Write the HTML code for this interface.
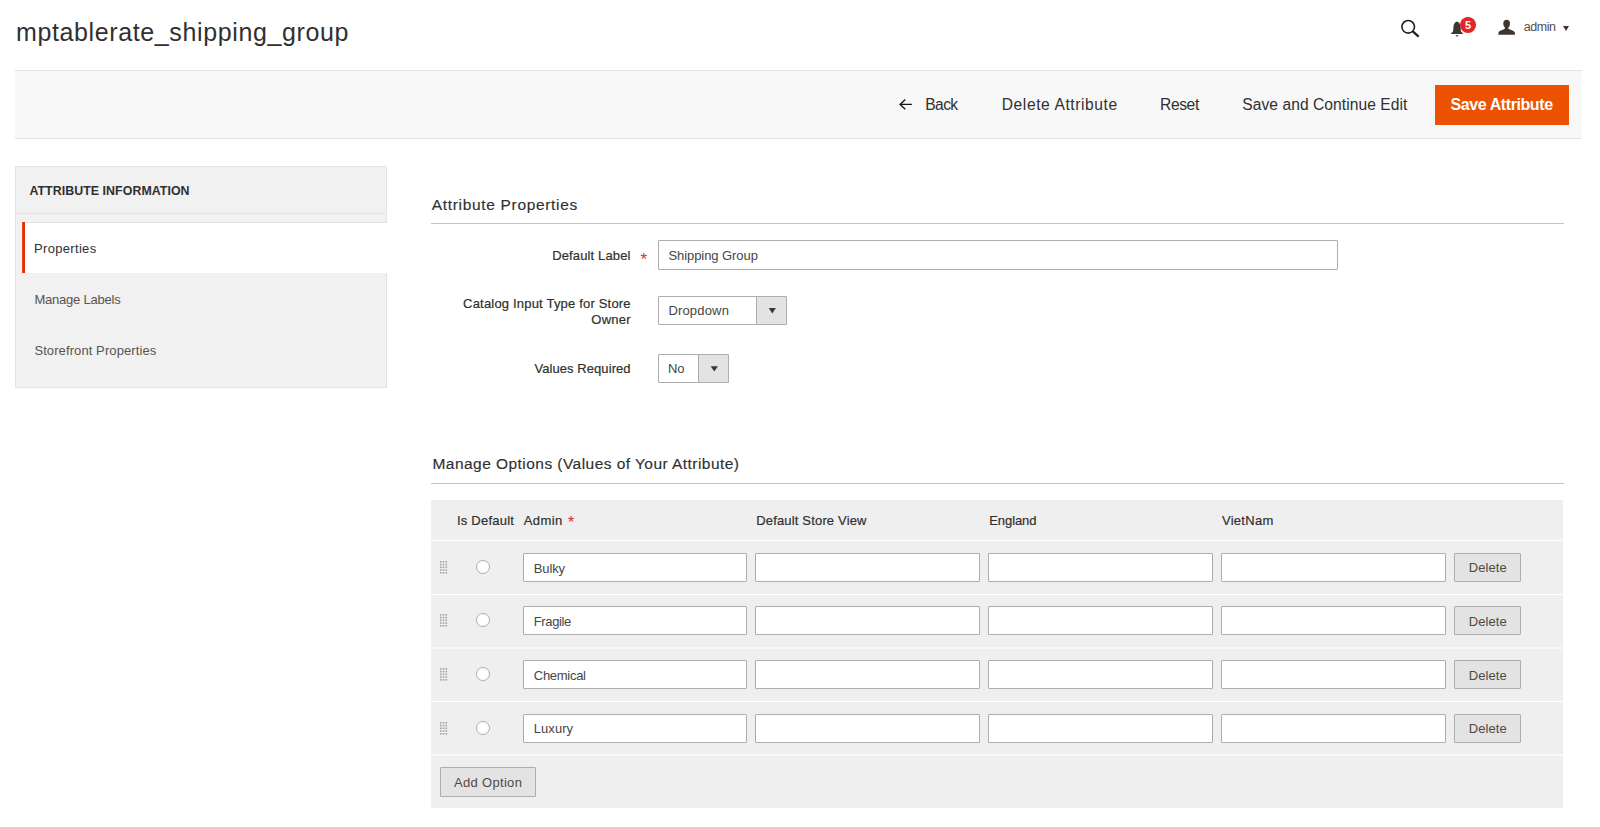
<!DOCTYPE html>
<html><head><meta charset="utf-8"><title>mptablerate_shipping_group</title>
<style>
html,body{margin:0;padding:0;background:#fff;width:1600px;height:827px;overflow:hidden;}
body{position:relative;font-family:"Liberation Sans",sans-serif;}
.t{position:absolute;white-space:nowrap;line-height:1;}
.b{position:absolute;}
</style></head><body>
<div class="t" style="left:16.00px;top:19.94px;font-size:25px;letter-spacing:0.621px;color:#303030;">mptablerate_shipping_group</div>
<svg class="b" style="left:1395px;top:12px" width="30" height="30" viewBox="0 0 30 30"><circle cx="13.2" cy="14.8" r="6.3" fill="none" stroke="#1e1e1e" stroke-width="1.6"/><line x1="17.8" y1="19.4" x2="23.6" y2="24.6" stroke="#1e1e1e" stroke-width="2.1" stroke-linecap="butt"/></svg>
<svg class="b" style="left:1445px;top:15px" width="24" height="24" viewBox="0 0 24 24"><path d="M12 6.4C9.6 6.8 8.6 9.4 8.4 12.4L8.1 16.2 5.7 19H18.3L15.9 16.2 15.6 12.4C15.4 9.4 14.4 6.8 12 6.4Z" fill="#41362f"/><path d="M10.5 20.2h3L12 22z" fill="#41362f"/></svg>
<div class="b" style="left:1460px;top:17px;width:16px;height:16px;border-radius:50%;background:#e22626;"></div>
<div class="t" style="left:1465.00px;top:19.69px;font-size:11px;letter-spacing:-0.105px;color:#fff;font-weight:bold;">5</div>
<svg class="b" style="left:1497px;top:19px" width="20" height="17" viewBox="0 0 20 17"><path d="M9.6 0.8C7.6 0.8 6.3 2.2 6.3 4.4 6.3 6.2 7 7.6 7.9 8.4V9.8C6 10.8 2.8 11.6 1.5 13.2L1.3 15.8H18L17.8 13.2C16.5 11.6 13.3 10.8 11.4 9.8V8.4C12.3 7.6 13 6.2 13 4.4 13 2.2 11.7 0.8 9.6 0.8Z" fill="#41362f"/></svg>
<div class="t" style="left:1523.75px;top:20.67px;font-size:12.5px;letter-spacing:-0.453px;color:#57504b;">admin</div>
<div class="b" style="left:1562.5px;top:25.8px;width:0;height:0;border-left:3.7px solid transparent;border-right:3.7px solid transparent;border-top:5px solid #41362f;"></div>
<div class="b" style="left:15px;top:70px;width:1567px;height:69px;background:#f8f8f8;border-top:1px solid #e3e3e3;border-bottom:1px solid #e3e3e3;box-sizing:border-box;"></div>
<svg class="b" style="left:898px;top:97px" width="16" height="15" viewBox="0 0 16 15"><path d="M13.9 7.4H2.2M7.3 2.5 2.1 7.4 7.3 12.2" fill="none" stroke="#151515" stroke-width="1.35"/></svg>
<div class="t" style="left:925.25px;top:97.29px;font-size:15.6px;letter-spacing:-0.596px;color:#303030;">Back</div>
<div class="t" style="left:1001.75px;top:97.29px;font-size:15.6px;letter-spacing:0.586px;color:#303030;">Delete Attribute</div>
<div class="t" style="left:1160.00px;top:97.29px;font-size:15.6px;letter-spacing:-0.379px;color:#303030;">Reset</div>
<div class="t" style="left:1242.30px;top:97.29px;font-size:15.6px;letter-spacing:0.059px;color:#303030;">Save and Continue Edit</div>
<div class="b" style="left:1435px;top:85px;width:134px;height:40px;background:#eb5202;"></div>
<div class="t" style="left:1450.60px;top:97.06px;font-size:16px;letter-spacing:-0.418px;color:#fff;font-weight:bold;">Save Attribute</div>
<div class="b" style="left:15px;top:166px;width:372px;height:222px;background:#f1f1f1;border:1px solid #e3e3e3;box-sizing:border-box;"></div>
<div class="b" style="left:16px;top:213px;width:370px;height:1px;background:#e3e3e3;"></div>
<div class="b" style="left:22px;top:222px;width:365px;height:51px;background:#fff;"></div>
<div class="b" style="left:25px;top:222px;width:362px;height:1px;background:#e3e3e3;"></div>
<div class="b" style="left:22px;top:222px;width:3px;height:51px;background:linear-gradient(90deg,#ea4a10 0,#ea4a10 33%,#e62a0a 33%);"></div>
<div class="t" style="left:29.40px;top:184.80px;font-size:12.4px;letter-spacing:0.048px;color:#303030;font-weight:bold;">ATTRIBUTE INFORMATION</div>
<div class="t" style="left:34.00px;top:241.80px;font-size:13px;letter-spacing:0.324px;color:#303030;">Properties</div>
<div class="t" style="left:34.40px;top:292.50px;font-size:13px;letter-spacing:-0.210px;color:#5a534e;">Manage Labels</div>
<div class="t" style="left:34.40px;top:343.60px;font-size:13px;letter-spacing:0.094px;color:#5a534e;">Storefront Properties</div>
<div class="t" style="left:431.75px;top:196.63px;font-size:15.5px;letter-spacing:0.675px;color:#303030;-webkit-text-stroke:0.15px #303030;">Attribute Properties</div>
<div class="b" style="left:431px;top:223px;width:1133px;height:1px;background:#cac3b4;"></div>
<div class="t" style="left:552.20px;top:249.00px;font-size:13px;letter-spacing:0.139px;color:#303030;-webkit-text-stroke:0.2px #303030;">Default Label</div>
<div class="t" style="left:640.50px;top:250.61px;font-size:17px;letter-spacing:0.120px;color:#e22626;">*</div>
<div class="b" style="left:658px;top:240px;width:680px;height:30px;background:#fff;border:1px solid #adadad;box-sizing:border-box;border-radius:1px;"></div>
<div class="t" style="left:668.40px;top:249.00px;font-size:13px;letter-spacing:-0.065px;color:#464646;">Shipping Group</div>
<div class="t" style="left:463.10px;top:296.90px;font-size:13px;letter-spacing:0.190px;color:#303030;-webkit-text-stroke:0.2px #303030;">Catalog Input Type for Store</div>
<div class="t" style="left:591.25px;top:313.00px;font-size:13px;letter-spacing:0.266px;color:#303030;-webkit-text-stroke:0.2px #303030;">Owner</div>
<div class="b" style="left:658px;top:296px;width:129px;height:29px;background:#fff;border:1px solid #adadad;box-sizing:border-box;border-radius:1px;"></div>
<div class="b" style="left:756px;top:296px;width:31px;height:29px;background:#e3e3e3;border:1px solid #adadad;box-sizing:border-box;border-radius:1px;"></div>
<svg class="b" style="left:760px;top:300px" width="20" height="20"><polygon points="8.7,8 15.9,8 12.3,13.4" fill="#41362f"/></svg>
<div class="t" style="left:668.40px;top:304.00px;font-size:13px;letter-spacing:0.174px;color:#464646;">Dropdown</div>
<div class="t" style="left:534.40px;top:361.90px;font-size:13px;letter-spacing:0.074px;color:#303030;-webkit-text-stroke:0.2px #303030;">Values Required</div>
<div class="b" style="left:658px;top:354px;width:71px;height:29px;background:#fff;border:1px solid #adadad;box-sizing:border-box;border-radius:1px;"></div>
<div class="b" style="left:698px;top:354px;width:31px;height:29px;background:#e3e3e3;border:1px solid #adadad;box-sizing:border-box;border-radius:1px;"></div>
<svg class="b" style="left:700px;top:358px" width="20" height="20"><polygon points="10.7,8.3 17.9,8.3 14.3,13.5" fill="#41362f"/></svg>
<div class="t" style="left:668.00px;top:362.00px;font-size:13px;letter-spacing:-0.240px;color:#464646;">No</div>
<div class="t" style="left:432.50px;top:456.38px;font-size:15.5px;letter-spacing:0.453px;color:#303030;-webkit-text-stroke:0.15px #303030;">Manage Options (Values of Your Attribute)</div>
<div class="b" style="left:431px;top:483px;width:1133px;height:1px;background:#cac3b4;"></div>
<div class="b" style="left:431px;top:500px;width:1132px;height:308px;background:#efefef;"></div>
<div class="b" style="left:431px;top:540px;width:1132px;height:1px;background:#fff;"></div>
<div class="b" style="left:431px;top:594px;width:1132px;height:1px;background:#fff;"></div>
<div class="b" style="left:431px;top:701px;width:1132px;height:1px;background:#fff;"></div>
<div class="b" style="left:431px;top:647px;width:1132px;height:2px;background:rgba(255,255,255,0.55);"></div>
<div class="b" style="left:431px;top:754px;width:1132px;height:2px;background:rgba(255,255,255,0.55);"></div>
<div class="t" style="left:456.90px;top:513.90px;font-size:13px;letter-spacing:0.242px;color:#303030;-webkit-text-stroke:0.2px #303030;">Is Default</div>
<div class="t" style="left:523.75px;top:513.90px;font-size:13px;letter-spacing:0.411px;color:#303030;-webkit-text-stroke:0.2px #303030;">Admin</div>
<div class="t" style="left:568.00px;top:515.46px;font-size:16px;letter-spacing:-0.490px;color:#e22626;">*</div>
<div class="t" style="left:756.25px;top:514.00px;font-size:13px;letter-spacing:0.165px;color:#303030;-webkit-text-stroke:0.2px #303030;">Default Store View</div>
<div class="t" style="left:989.25px;top:514.00px;font-size:13px;letter-spacing:-0.077px;color:#303030;-webkit-text-stroke:0.2px #303030;">England</div>
<div class="t" style="left:1222.00px;top:514.00px;font-size:13px;letter-spacing:0.268px;color:#303030;-webkit-text-stroke:0.2px #303030;">VietNam</div>
<svg class="b" style="left:440.2px;top:560.70px" width="8" height="13"><rect x="0.00" y="0.00" width="1.6" height="1.6" fill="#a8a29c"/><rect x="0.00" y="2.75" width="1.6" height="1.6" fill="#a8a29c"/><rect x="0.00" y="5.50" width="1.6" height="1.6" fill="#a8a29c"/><rect x="0.00" y="8.25" width="1.6" height="1.6" fill="#a8a29c"/><rect x="0.00" y="11.00" width="1.6" height="1.6" fill="#a8a29c"/><rect x="2.75" y="0.00" width="1.6" height="1.6" fill="#a8a29c"/><rect x="2.75" y="2.75" width="1.6" height="1.6" fill="#a8a29c"/><rect x="2.75" y="5.50" width="1.6" height="1.6" fill="#a8a29c"/><rect x="2.75" y="8.25" width="1.6" height="1.6" fill="#a8a29c"/><rect x="2.75" y="11.00" width="1.6" height="1.6" fill="#a8a29c"/><rect x="5.50" y="0.00" width="1.6" height="1.6" fill="#a8a29c"/><rect x="5.50" y="2.75" width="1.6" height="1.6" fill="#a8a29c"/><rect x="5.50" y="5.50" width="1.6" height="1.6" fill="#a8a29c"/><rect x="5.50" y="8.25" width="1.6" height="1.6" fill="#a8a29c"/><rect x="5.50" y="11.00" width="1.6" height="1.6" fill="#a8a29c"/></svg>
<div class="b" style="left:476px;top:560px;width:14px;height:14px;border-radius:50%;border:1px solid #adadad;background:#fff;box-sizing:border-box;"></div>
<div class="b" style="left:523px;top:553px;width:224px;height:29px;background:#fff;border:1px solid #adadad;box-sizing:border-box;border-radius:1px;"></div>
<div class="b" style="left:755px;top:553px;width:225px;height:29px;background:#fff;border:1px solid #adadad;box-sizing:border-box;border-radius:1px;"></div>
<div class="b" style="left:988px;top:553px;width:225px;height:29px;background:#fff;border:1px solid #adadad;box-sizing:border-box;border-radius:1px;"></div>
<div class="b" style="left:1221px;top:553px;width:225px;height:29px;background:#fff;border:1px solid #adadad;box-sizing:border-box;border-radius:1px;"></div>
<div class="t" style="left:533.80px;top:561.60px;font-size:13px;letter-spacing:-0.146px;color:#464646;">Bulky</div>
<div class="b" style="left:1454px;top:553px;width:67px;height:29px;background:#e3e3e3;border:1px solid #adadad;box-sizing:border-box;border-radius:1px;"></div>
<div class="t" style="left:1468.75px;top:561.40px;font-size:13px;letter-spacing:0.086px;color:#514943;">Delete</div>
<svg class="b" style="left:440.2px;top:613.70px" width="8" height="13"><rect x="0.00" y="0.00" width="1.6" height="1.6" fill="#a8a29c"/><rect x="0.00" y="2.75" width="1.6" height="1.6" fill="#a8a29c"/><rect x="0.00" y="5.50" width="1.6" height="1.6" fill="#a8a29c"/><rect x="0.00" y="8.25" width="1.6" height="1.6" fill="#a8a29c"/><rect x="0.00" y="11.00" width="1.6" height="1.6" fill="#a8a29c"/><rect x="2.75" y="0.00" width="1.6" height="1.6" fill="#a8a29c"/><rect x="2.75" y="2.75" width="1.6" height="1.6" fill="#a8a29c"/><rect x="2.75" y="5.50" width="1.6" height="1.6" fill="#a8a29c"/><rect x="2.75" y="8.25" width="1.6" height="1.6" fill="#a8a29c"/><rect x="2.75" y="11.00" width="1.6" height="1.6" fill="#a8a29c"/><rect x="5.50" y="0.00" width="1.6" height="1.6" fill="#a8a29c"/><rect x="5.50" y="2.75" width="1.6" height="1.6" fill="#a8a29c"/><rect x="5.50" y="5.50" width="1.6" height="1.6" fill="#a8a29c"/><rect x="5.50" y="8.25" width="1.6" height="1.6" fill="#a8a29c"/><rect x="5.50" y="11.00" width="1.6" height="1.6" fill="#a8a29c"/></svg>
<div class="b" style="left:476px;top:613px;width:14px;height:14px;border-radius:50%;border:1px solid #adadad;background:#fff;box-sizing:border-box;"></div>
<div class="b" style="left:523px;top:606px;width:224px;height:29px;background:#fff;border:1px solid #adadad;box-sizing:border-box;border-radius:1px;"></div>
<div class="b" style="left:755px;top:606px;width:225px;height:29px;background:#fff;border:1px solid #adadad;box-sizing:border-box;border-radius:1px;"></div>
<div class="b" style="left:988px;top:606px;width:225px;height:29px;background:#fff;border:1px solid #adadad;box-sizing:border-box;border-radius:1px;"></div>
<div class="b" style="left:1221px;top:606px;width:225px;height:29px;background:#fff;border:1px solid #adadad;box-sizing:border-box;border-radius:1px;"></div>
<div class="t" style="left:533.80px;top:615.00px;font-size:13px;letter-spacing:-0.377px;color:#464646;">Fragile</div>
<div class="b" style="left:1454px;top:606px;width:67px;height:29px;background:#e3e3e3;border:1px solid #adadad;box-sizing:border-box;border-radius:1px;"></div>
<div class="t" style="left:1468.75px;top:614.80px;font-size:13px;letter-spacing:0.086px;color:#514943;">Delete</div>
<svg class="b" style="left:440.2px;top:667.70px" width="8" height="13"><rect x="0.00" y="0.00" width="1.6" height="1.6" fill="#a8a29c"/><rect x="0.00" y="2.75" width="1.6" height="1.6" fill="#a8a29c"/><rect x="0.00" y="5.50" width="1.6" height="1.6" fill="#a8a29c"/><rect x="0.00" y="8.25" width="1.6" height="1.6" fill="#a8a29c"/><rect x="0.00" y="11.00" width="1.6" height="1.6" fill="#a8a29c"/><rect x="2.75" y="0.00" width="1.6" height="1.6" fill="#a8a29c"/><rect x="2.75" y="2.75" width="1.6" height="1.6" fill="#a8a29c"/><rect x="2.75" y="5.50" width="1.6" height="1.6" fill="#a8a29c"/><rect x="2.75" y="8.25" width="1.6" height="1.6" fill="#a8a29c"/><rect x="2.75" y="11.00" width="1.6" height="1.6" fill="#a8a29c"/><rect x="5.50" y="0.00" width="1.6" height="1.6" fill="#a8a29c"/><rect x="5.50" y="2.75" width="1.6" height="1.6" fill="#a8a29c"/><rect x="5.50" y="5.50" width="1.6" height="1.6" fill="#a8a29c"/><rect x="5.50" y="8.25" width="1.6" height="1.6" fill="#a8a29c"/><rect x="5.50" y="11.00" width="1.6" height="1.6" fill="#a8a29c"/></svg>
<div class="b" style="left:476px;top:667px;width:14px;height:14px;border-radius:50%;border:1px solid #adadad;background:#fff;box-sizing:border-box;"></div>
<div class="b" style="left:523px;top:660px;width:224px;height:29px;background:#fff;border:1px solid #adadad;box-sizing:border-box;border-radius:1px;"></div>
<div class="b" style="left:755px;top:660px;width:225px;height:29px;background:#fff;border:1px solid #adadad;box-sizing:border-box;border-radius:1px;"></div>
<div class="b" style="left:988px;top:660px;width:225px;height:29px;background:#fff;border:1px solid #adadad;box-sizing:border-box;border-radius:1px;"></div>
<div class="b" style="left:1221px;top:660px;width:225px;height:29px;background:#fff;border:1px solid #adadad;box-sizing:border-box;border-radius:1px;"></div>
<div class="t" style="left:533.80px;top:669.00px;font-size:13px;letter-spacing:-0.287px;color:#464646;">Chemical</div>
<div class="b" style="left:1454px;top:660px;width:67px;height:29px;background:#e3e3e3;border:1px solid #adadad;box-sizing:border-box;border-radius:1px;"></div>
<div class="t" style="left:1468.75px;top:668.80px;font-size:13px;letter-spacing:0.086px;color:#514943;">Delete</div>
<svg class="b" style="left:440.2px;top:721.70px" width="8" height="13"><rect x="0.00" y="0.00" width="1.6" height="1.6" fill="#a8a29c"/><rect x="0.00" y="2.75" width="1.6" height="1.6" fill="#a8a29c"/><rect x="0.00" y="5.50" width="1.6" height="1.6" fill="#a8a29c"/><rect x="0.00" y="8.25" width="1.6" height="1.6" fill="#a8a29c"/><rect x="0.00" y="11.00" width="1.6" height="1.6" fill="#a8a29c"/><rect x="2.75" y="0.00" width="1.6" height="1.6" fill="#a8a29c"/><rect x="2.75" y="2.75" width="1.6" height="1.6" fill="#a8a29c"/><rect x="2.75" y="5.50" width="1.6" height="1.6" fill="#a8a29c"/><rect x="2.75" y="8.25" width="1.6" height="1.6" fill="#a8a29c"/><rect x="2.75" y="11.00" width="1.6" height="1.6" fill="#a8a29c"/><rect x="5.50" y="0.00" width="1.6" height="1.6" fill="#a8a29c"/><rect x="5.50" y="2.75" width="1.6" height="1.6" fill="#a8a29c"/><rect x="5.50" y="5.50" width="1.6" height="1.6" fill="#a8a29c"/><rect x="5.50" y="8.25" width="1.6" height="1.6" fill="#a8a29c"/><rect x="5.50" y="11.00" width="1.6" height="1.6" fill="#a8a29c"/></svg>
<div class="b" style="left:476px;top:721px;width:14px;height:14px;border-radius:50%;border:1px solid #adadad;background:#fff;box-sizing:border-box;"></div>
<div class="b" style="left:523px;top:714px;width:224px;height:29px;background:#fff;border:1px solid #adadad;box-sizing:border-box;border-radius:1px;"></div>
<div class="b" style="left:755px;top:714px;width:225px;height:29px;background:#fff;border:1px solid #adadad;box-sizing:border-box;border-radius:1px;"></div>
<div class="b" style="left:988px;top:714px;width:225px;height:29px;background:#fff;border:1px solid #adadad;box-sizing:border-box;border-radius:1px;"></div>
<div class="b" style="left:1221px;top:714px;width:225px;height:29px;background:#fff;border:1px solid #adadad;box-sizing:border-box;border-radius:1px;"></div>
<div class="t" style="left:533.80px;top:722.00px;font-size:13px;letter-spacing:0.040px;color:#464646;">Luxury</div>
<div class="b" style="left:1454px;top:714px;width:67px;height:29px;background:#e3e3e3;border:1px solid #adadad;box-sizing:border-box;border-radius:1px;"></div>
<div class="t" style="left:1468.75px;top:721.80px;font-size:13px;letter-spacing:0.086px;color:#514943;">Delete</div>
<div class="b" style="left:440px;top:767px;width:96px;height:30px;background:#e3e3e3;border:1px solid #adadad;box-sizing:border-box;border-radius:1px;"></div>
<div class="t" style="left:454.00px;top:775.50px;font-size:13px;letter-spacing:0.315px;color:#514943;">Add Option</div>
</body></html>
